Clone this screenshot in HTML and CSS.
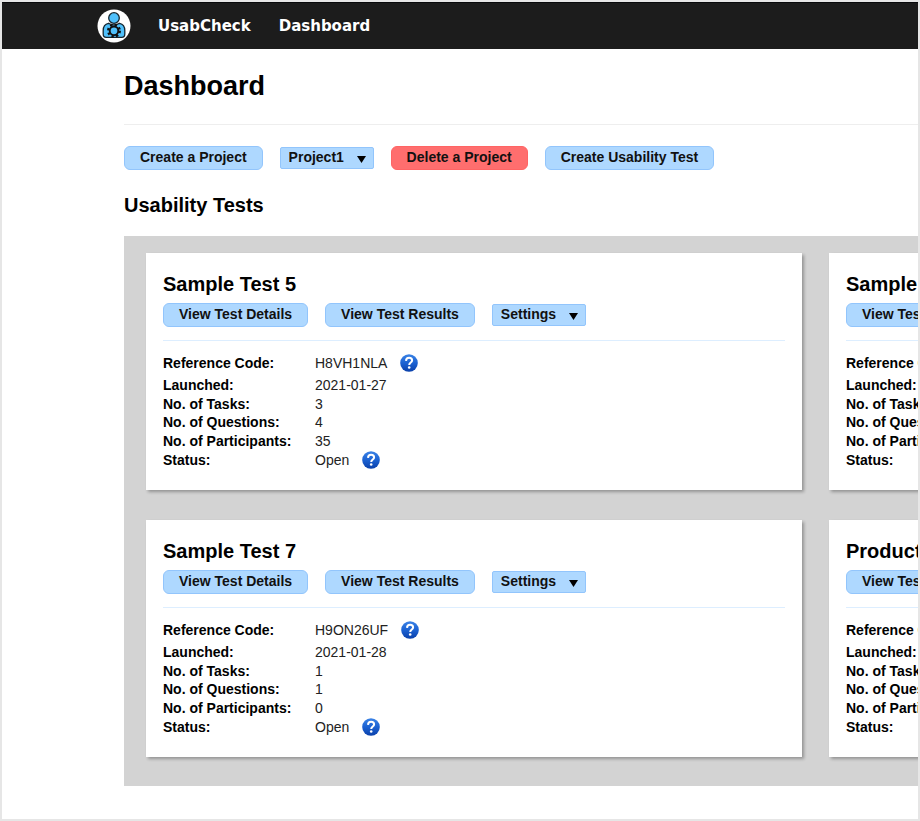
FILE: index.html
```html
<!DOCTYPE html>
<html lang="en">
<head>
<meta charset="utf-8">
<title>UsabCheck - Dashboard</title>
<link rel="stylesheet" href="styles.css">
</head>
<body>
<svg class="defs" aria-hidden="true">
  <defs>
    <linearGradient id="help-fill" x1="0" y1="0" x2="0" y2="1">
      <stop offset="0" stop-color="#3b83e6"/>
      <stop offset="0.5" stop-color="#1c62d2"/>
      <stop offset="1" stop-color="#0a40aa"/>
    </linearGradient>
    <symbol id="help" viewBox="0 0 18 18">
      <circle cx="9" cy="9" r="8.800" fill="url(#help-fill)"/>
      <path d="M6 6.900C6.100 4.700 7.400 3.800 9.100 3.800c1.800 0 3 1 3 2.600C12.100 8.500 9.200 8.500 9.200 11" fill="none" stroke="#fff" stroke-width="2"/>
      <circle cx="9.200" cy="13.500" r="1.300" fill="#fff"/>
    </symbol>
    <symbol id="caret" viewBox="0 0 9 7"><path d="M0 0h9L4.500 7z"/></symbol>
  </defs>
</svg>
<div class="page">
  <header class="topbar">
    <a class="logo" href="#" aria-label="UsabCheck home">
      <svg viewBox="0 0 34 34" width="34" height="34">
        <circle cx="17" cy="17" r="16.500" fill="#fff"/>
        <g fill="#4fc0fb" stroke="#16262f" stroke-width="1.300">
          <path d="M11.500 14.300C8 15 6.200 18 6.200 21.500v3.500c0 2 1 3.300 3 3.300h15.600c2 0 3-1.300 3-3.300v-3.500c0-3.500-1.800-6.500-5.300-7.200-2.500 2.200-8.500 2.200-11 0z"/>
          <circle cx="17" cy="9" r="5.300"/>
        </g>
        <circle cx="17" cy="21.800" r="5.800" fill="none" stroke="#101010" stroke-width="2.400" stroke-dasharray="2.300 2.255"/>
        <circle cx="17" cy="21.800" r="4.300" fill="#4fc0fb" stroke="#101010" stroke-width="1.900"/>
      </svg>
    </a>
    <nav class="nav">
      <a href="#">UsabCheck</a>
      <a href="#">Dashboard</a>
    </nav>
  </header>
  <main class="content">
    <h1>Dashboard</h1>
    <div class="actions">
      <button class="btn" type="button">Create a Project</button>
      <span class="dropdown">
        <select aria-label="Project"><option>Project1</option></select>
        <svg class="caret" aria-hidden="true"><use href="#caret"/></svg>
      </span>
      <button class="btn danger" type="button">Delete a Project</button>
      <button class="btn" type="button">Create Usability Test</button>
    </div>
    <h2>Usability Tests</h2>
    <section class="tests">
      <article class="card">
        <h3>Sample Test 5</h3>
        <div class="card-actions">
          <button class="btn" type="button">View Test Details</button>
          <button class="btn" type="button">View Test Results</button>
          <span class="dropdown">
            <select aria-label="Settings"><option>Settings</option></select>
            <svg class="caret" aria-hidden="true"><use href="#caret"/></svg>
          </span>
        </div>
        <table>
          <tr class="with-help"><th scope="row">Reference Code:</th><td>H8VH1NLA<svg class="help"><use href="#help"/></svg></td></tr>
          <tr><th scope="row">Launched:</th><td>2021-01-27</td></tr>
          <tr><th scope="row">No. of Tasks:</th><td>3</td></tr>
          <tr class="compact"><th scope="row">No. of Questions:</th><td>4</td></tr>
          <tr><th scope="row">No. of Participants:</th><td>35</td></tr>
          <tr><th scope="row">Status:</th><td>Open<svg class="help"><use href="#help"/></svg></td></tr>
        </table>
      </article>
      <article class="card">
        <h3>Sample Test 6</h3>
        <div class="card-actions">
          <button class="btn" type="button">View Test Details</button>
        </div>
        <table>
          <tr class="with-help"><th scope="row">Reference Code:</th><td></td></tr>
          <tr><th scope="row">Launched:</th><td></td></tr>
          <tr><th scope="row">No. of Tasks:</th><td></td></tr>
          <tr class="compact"><th scope="row">No. of Questions:</th><td></td></tr>
          <tr><th scope="row">No. of Participants:</th><td></td></tr>
          <tr><th scope="row">Status:</th><td></td></tr>
        </table>
      </article>
      <article class="card">
        <h3>Sample Test 7</h3>
        <div class="card-actions">
          <button class="btn" type="button">View Test Details</button>
          <button class="btn" type="button">View Test Results</button>
          <span class="dropdown">
            <select aria-label="Settings"><option>Settings</option></select>
            <svg class="caret" aria-hidden="true"><use href="#caret"/></svg>
          </span>
        </div>
        <table>
          <tr class="with-help"><th scope="row">Reference Code:</th><td>H9ON26UF<svg class="help"><use href="#help"/></svg></td></tr>
          <tr><th scope="row">Launched:</th><td>2021-01-28</td></tr>
          <tr><th scope="row">No. of Tasks:</th><td>1</td></tr>
          <tr class="compact"><th scope="row">No. of Questions:</th><td>1</td></tr>
          <tr><th scope="row">No. of Participants:</th><td>0</td></tr>
          <tr><th scope="row">Status:</th><td>Open<svg class="help"><use href="#help"/></svg></td></tr>
        </table>
      </article>
      <article class="card">
        <h3>Product Test</h3>
        <div class="card-actions">
          <button class="btn" type="button">View Test Details</button>
        </div>
        <table>
          <tr class="with-help"><th scope="row">Reference Code:</th><td></td></tr>
          <tr><th scope="row">Launched:</th><td></td></tr>
          <tr><th scope="row">No. of Tasks:</th><td></td></tr>
          <tr class="compact"><th scope="row">No. of Questions:</th><td></td></tr>
          <tr><th scope="row">No. of Participants:</th><td></td></tr>
          <tr><th scope="row">Status:</th><td></td></tr>
        </table>
      </article>
    </section>
  </main>
</div>
</body>
</html>
```
FILE: styles.css
```css
* { box-sizing: border-box; }
body {
  margin: 0;
  font-family: "Liberation Sans", Arial, sans-serif;
  font-size: 14px;
  color: #000;
}
.defs { position: absolute; width: 0; height: 0; }
.page {
  min-height: 100vh;
  border: 2px solid #e6e6e6;
  background: #fff;
  overflow: hidden;
}
.topbar {
  display: flex;
  align-items: center;
  gap: 27px;
  height: 47px;
  padding-left: 95px;
  background: #1c1c1c;
  border-top: 1px solid #08090b;
}
.logo, .logo svg { display: block; }
.nav {
  display: flex;
  gap: 28px;
  font: bold 15px "DejaVu Sans", Verdana, sans-serif;
}
.nav a { color: #fff; text-decoration: none; }
.content { padding: 20px 0 24px 122px; }
h1, h2, h3 { margin: 0; font-weight: bold; }
h1 {
  font-size: 27px;
  line-height: 34px;
  padding-bottom: 21px;
  border-bottom: 1px solid #eee;
}
h2 { font-size: 20px; line-height: 24px; margin: 23px 0 19px; }
h3 { font-size: 20px; line-height: 24px; }
.actions, .card-actions { display: flex; align-items: center; gap: 17px; }
.actions { margin-top: 21px; }
.btn {
  height: 24px;
  padding: 0 15px 2px;
  border: 1px solid #92c5fc;
  border-radius: 6px;
  background: #aed8ff;
  color: #111;
  font: bold 14px "Liberation Sans", Arial, sans-serif;
}
.danger { background: #ff6e6e; border-color: #ff6464; }
.dropdown { position: relative; display: block; }
.dropdown select {
  appearance: none;
  display: block;
  width: 94px;
  height: 22px;
  margin: 0;
  padding: 0 8px 2px;
  border: 1px solid #92c5fc;
  border-radius: 2px;
  background: #aed8ff;
  color: #111;
  font: bold 14px "Liberation Sans", Arial, sans-serif;
}
.caret {
  position: absolute;
  right: 8px;
  top: 9px;
  width: 9px;
  height: 7px;
  pointer-events: none;
}
.tests {
  display: grid;
  grid-template-columns: repeat(2, 656px);
  gap: 30px 27px;
  padding: 17px 22px 29px;
  background: #d3d3d3;
}
.card {
  padding: 19px 17px 21px;
  background: #fff;
  box-shadow: 2px 2px 3px rgba(0, 0, 0, 0.3);
}
.card-actions {
  margin-top: 7px;
  padding-bottom: 13px;
  border-bottom: 1px solid #ddeeff;
}
table { margin-top: 9px; border-collapse: collapse; }
th, td { padding: 0; height: 19px; line-height: 18px; text-align: left; vertical-align: middle; }
th { width: 152px; font-weight: bold; }
td { color: #222; }
.with-help th, .with-help td { height: 25px; }
.compact th, .compact td { height: 18px; }
.help {
  width: 18px;
  height: 18px;
  margin-left: 13px;
  vertical-align: -4px;
}
```
